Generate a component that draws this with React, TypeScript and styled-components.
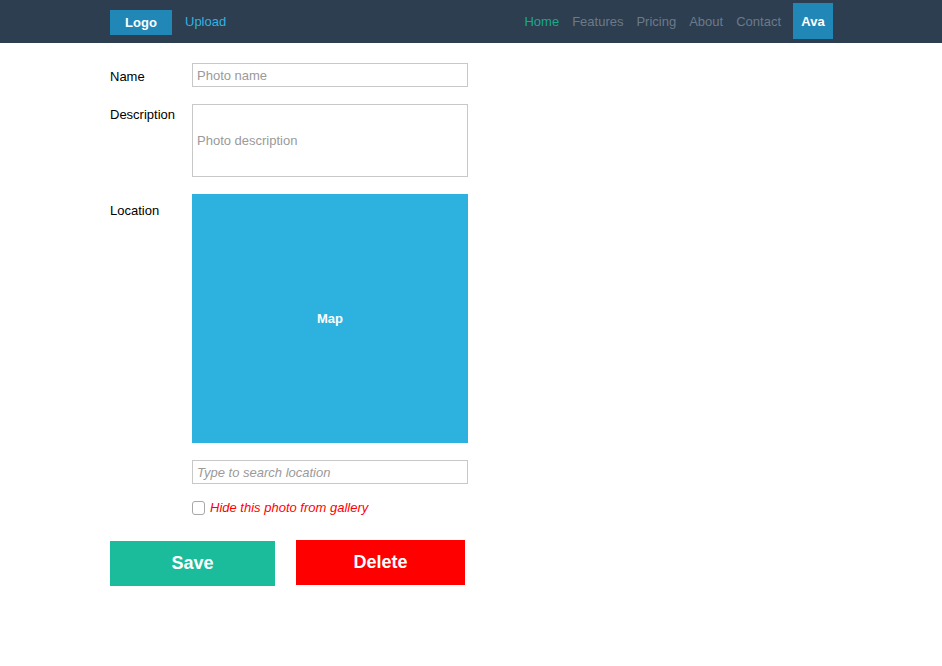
import React from "react";
import styled, { createGlobalStyle } from "styled-components";

const Global = createGlobalStyle`
  html, body { margin: 0; padding: 0; background: #fff; }
  body { font-family: "Liberation Sans", Arial, sans-serif; font-size: 13px; color: #000; }
  * { box-sizing: border-box; }
`;

const NavBar = styled.header`
  height: 43px;
  background: #2c3e50;
`;

const NavInner = styled.div`
  width: 723px;
  margin-left: 110px;
  height: 100%;
  display: flex;
  align-items: center;
  justify-content: space-between;
`;

const NavGroup = styled.div`
  display: flex;
  align-items: center;
`;

const Brand = styled.div`
  width: 62px;
  height: 25px;
  background: #2187b6;
  color: #fff;
  font-weight: 700;
  font-size: 13px;
  display: flex;
  align-items: center;
  justify-content: center;
  margin-right: 13px;
  margin-top: 1px;
`;

const NavLink = styled.a<{ $color: string }>`
  color: ${(p) => p.$color};
  font-size: 13px;
  text-decoration: none;
  margin-right: 13px;
`;

const Avatar = styled.div`
  width: 40px;
  height: 36px;
  background: #2187b6;
  color: #fff;
  font-weight: 700;
  font-size: 13px;
  display: flex;
  align-items: center;
  justify-content: center;
  margin-left: -1px;
  margin-bottom: 1px;
`;

const Main = styled.main`
  margin-left: 110px;
  width: 358px;
  padding-top: 20px;
  display: flex;
  flex-direction: column;
`;

const Row = styled.div<{ $gap: number }>`
  display: grid;
  grid-template-columns: 82px 276px;
  margin-bottom: ${(p) => p.$gap}px;
`;

const Label = styled.label<{ $top: number }>`
  font-size: 13px;
  line-height: 16px;
  padding-top: ${(p) => p.$top}px;
`;

const TextInput = styled.input<{ $italic?: boolean }>`
  width: 276px;
  height: 24px;
  border: 1px solid #c8c8c8;
  padding: 0 4px;
  font-family: "Liberation Sans", Arial, sans-serif;
  font-size: 13px;
  font-style: ${(p) => (p.$italic ? "italic" : "normal")};
  outline: none;
  &::placeholder { color: #9a9a9a; }
`;

const TextArea = styled.div`
  width: 276px;
  height: 73px;
  border: 1px solid #c8c8c8;
  padding: 0 4px;
  display: flex;
  align-items: center;
  color: #9a9a9a;
  font-size: 13px;
`;

const MapBox = styled.div`
  width: 276px;
  height: 249px;
  background: #2db1de;
  color: #fff;
  font-weight: 700;
  font-size: 13px;
  display: flex;
  align-items: center;
  justify-content: center;
`;

const CheckRow = styled.label`
  display: flex;
  align-items: center;
  color: #ff0000;
  font-style: italic;
  font-size: 13px;
  gap: 5px;
`;

const Box = styled.span`
  width: 13px;
  height: 14px;
  border: 1px solid #a8a8a8;
  border-radius: 3px;
  background: #fff;
  display: inline-block;
`;

const Buttons = styled.div`
  display: flex;
  align-items: flex-start;
  gap: 21px;
  margin-top: 25px;
`;

const Button = styled.button<{ $bg: string; $w: number; $top: number }>`
  width: ${(p) => p.$w}px;
  height: 45px;
  margin-top: ${(p) => p.$top}px;
  background: ${(p) => p.$bg};
  color: #fff;
  border: none;
  font-family: "Liberation Sans", Arial, sans-serif;
  font-weight: 700;
  font-size: 18px;
  padding: 0;
`;

export default function App() {
  return (
    <>
      <Global />
      <NavBar>
        <NavInner>
          <NavGroup>
            <Brand>Logo</Brand>
            <NavLink $color="#2fb3e4">Upload</NavLink>
          </NavGroup>
          <NavGroup>
            <NavLink $color="#1aa88a">Home</NavLink>
            <NavLink $color="#6c7a89">Features</NavLink>
            <NavLink $color="#6c7a89">Pricing</NavLink>
            <NavLink $color="#6c7a89">About</NavLink>
            <NavLink $color="#6c7a89">Contact</NavLink>
            <Avatar>Ava</Avatar>
          </NavGroup>
        </NavInner>
      </NavBar>
      <Main>
        <Row $gap={17}>
          <Label $top={6}>Name</Label>
          <TextInput placeholder="Photo name" />
        </Row>
        <Row $gap={17}>
          <Label $top={3}>Description</Label>
          <TextArea>Photo description</TextArea>
        </Row>
        <Row $gap={17}>
          <Label $top={9}>Location</Label>
          <MapBox>Map</MapBox>
        </Row>
        <Row $gap={16}>
          <span />
          <TextInput $italic placeholder="Type to search location" />
        </Row>
        <Row $gap={0}>
          <span />
          <CheckRow>
            <Box />
            Hide this photo from gallery
          </CheckRow>
        </Row>
        <Buttons>
          <Button $bg="#1abc9c" $w={165} $top={1}>Save</Button>
          <Button $bg="#ff0000" $w={169} $top={0}>Delete</Button>
        </Buttons>
      </Main>
    </>
  );
}
